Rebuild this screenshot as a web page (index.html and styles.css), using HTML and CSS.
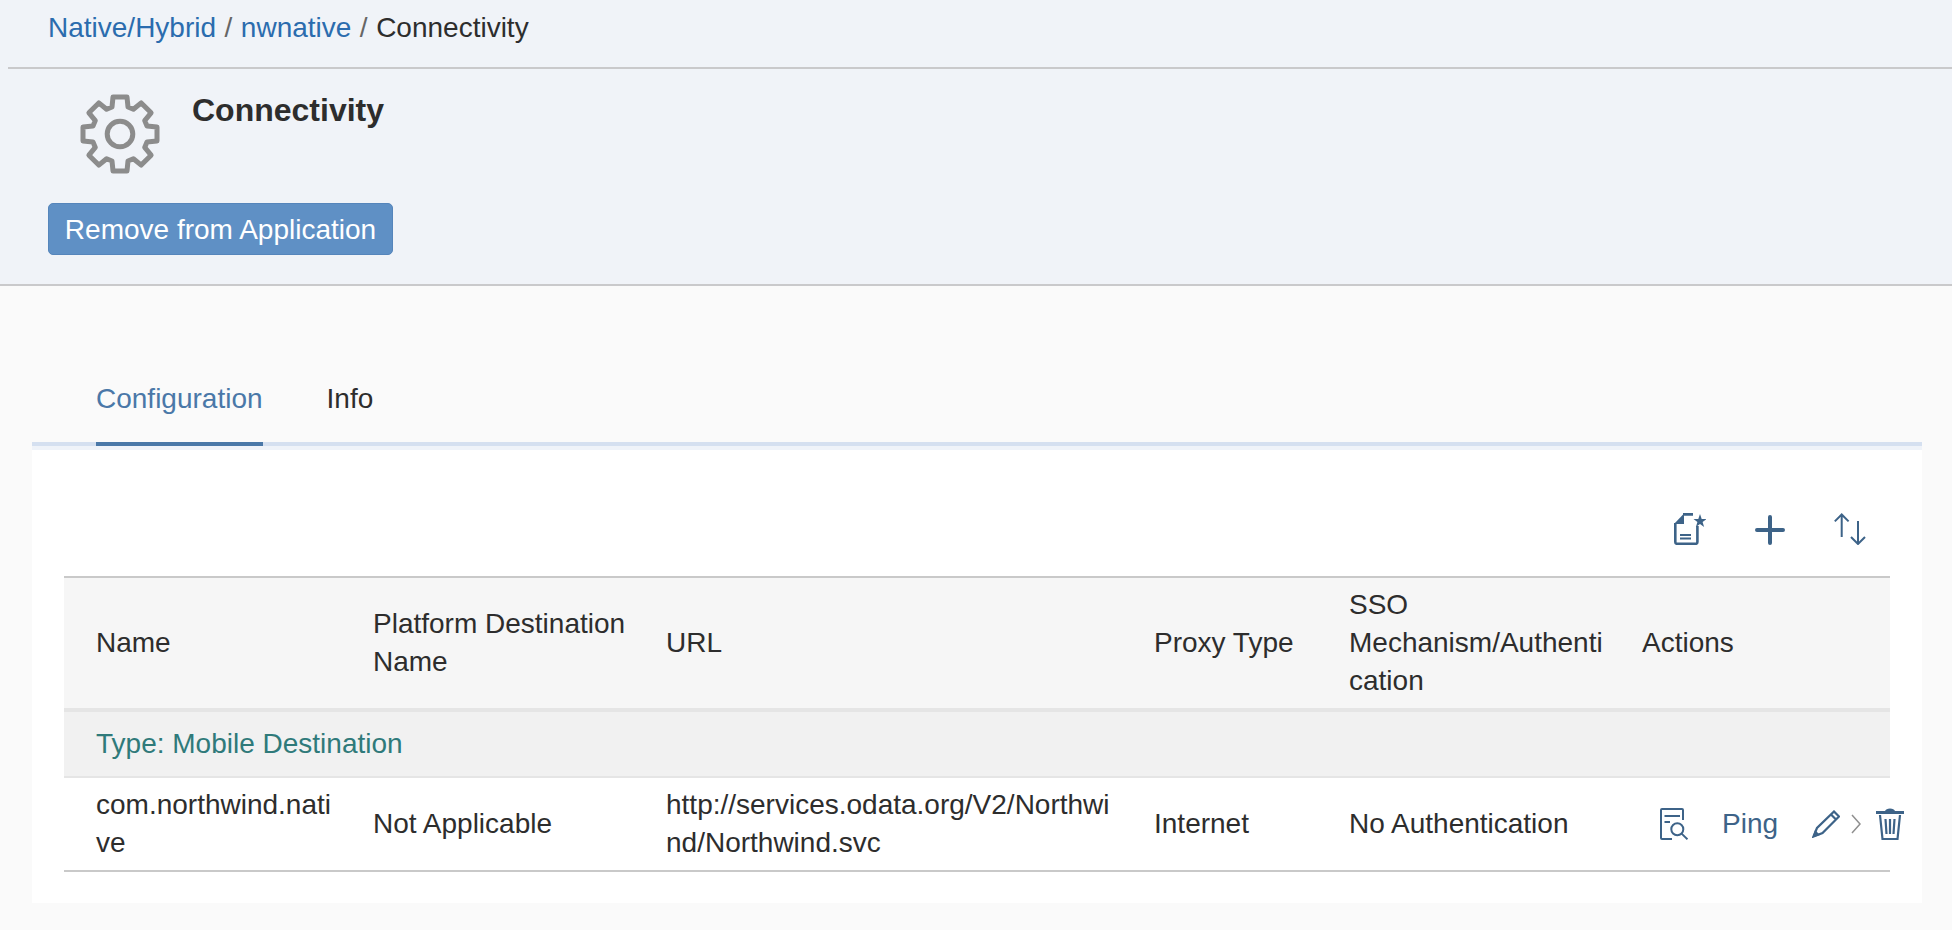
FILE: index.html
```html
<!DOCTYPE html>
<html lang="en">

<head>
    <meta charset="UTF-8">
    <meta name="viewport" content="width=device-width, initial-scale=1.0">
    <title>Connectivity</title>
    <link rel="stylesheet" href="styles.css">
</head>

<body>
    <header class="page-head">
        <nav class="crumbs">
            <a href="#">Native/Hybrid</a><span class="sep">/</span><a href="#">nwnative</a><span class="sep">/</span><span>Connectivity</span>
        </nav>
        <div class="head-main">
            <svg class="gear" viewBox="-40 -40 80 80">
                <path d="M-8 -27L-7 -37L7 -37L8 -27L13.4 -24.7L21.2 -31.1L31.1 -21.2L24.7 -13.4L27 -8L37 -7L37 7L27 8L24.7 13.4L31.1 21.2L21.2 31.1L13.4 24.7L8 27L7 37L-7 37L-8 27L-13.4 24.7L-21.2 31.1L-31.1 21.2L-24.7 13.4L-27 8L-37 7L-37 -7L-27 -8L-24.7 -13.4L-31.1 -21.2L-21.2 -31.1L-13.4 -24.7Z" />
                <circle cx="0" cy="0" r="12.8" />
            </svg>
            <h1>Connectivity</h1>
        </div>
        <button class="remove-btn" type="button">Remove from Application</button>
    </header>

    <main class="content">
        <div class="tabs">
            <a class="tab active" href="#">Configuration</a>
            <a class="tab" href="#">Info</a>
        </div>
        <section class="panel">
            <div class="toolbar">
                <svg class="tool tool-file" viewBox="0 0 32 32">
                    <path d="M9 1.4H19M1.3 10V29Q1.3 30.8 3.1 30.8H21.6Q23.4 30.8 23.4 29V13" />
                    <path class="thin" d="M6 22H17M6 25.5H17" />
                    <path class="solid" d="M0 11L10 0.4V11Z" />
                    <path class="solid" d="M26 1L27.7 6H32.5L28.6 9L30.1 14L26 11L21.9 14L23.4 9L19.5 6H24.3Z" />
                </svg>
                <svg class="tool" viewBox="0 0 32 32">
                    <path class="thick" d="M16 4V30M3 17H29" />
                </svg>
                <svg class="tool" viewBox="0 0 32 32">
                    <path d="M7.7 24V1.5M0.8 8.4L7.7 1.5L14.6 8.4M24 8V31M17 24L24 31L31 24" />
                </svg>
            </div>
            <table class="dest-table">
                <colgroup>
                    <col class="col-name">
                    <col class="col-platform">
                    <col class="col-url">
                    <col class="col-proxy">
                    <col class="col-sso">
                    <col>
                </colgroup>
                <thead>
                    <tr>
                        <th>Name</th>
                        <th>Platform Destination Name</th>
                        <th>URL</th>
                        <th>Proxy Type</th>
                        <th>SSO Mechanism/Authentication</th>
                        <th>Actions</th>
                    </tr>
                </thead>
                <tbody>
                    <tr class="group-row">
                        <td colspan="6">Type: Mobile Destination</td>
                    </tr>
                    <tr class="data-row">
                        <td>com.northwind.native</td>
                        <td>Not Applicable</td>
                        <td>http://services.odata.org/V2/Northwind/Northwind.svc</td>
                        <td>Internet</td>
                        <td>No Authentication</td>
                        <td class="actions-cell">
                            <div class="actions">
                                <svg class="act-doc" viewBox="0 0 28 32">
                                    <path d="M23 12V2Q23 1 22 1H2Q1 1 1 2V30Q1 31 2 31H12M4.5 8H20M4.5 14H10" />
                                    <circle cx="17.3" cy="21.3" r="6" />
                                    <path d="M21.6 25.6L27.5 31.3" />
                                </svg>
                                <a class="ping" href="#">Ping</a>
                                <svg class="act-edit" viewBox="0 0 28 28">
                                    <path d="M1.5 26.5L5 18L22 1.5L27 6.5L10.5 23ZM19 4.5L24 9.5" />
                                    <path class="solid" d="M0.5 27.5L3 20L8 25Z" />
                                </svg>
                                <svg class="act-chevron" viewBox="0 0 10 20">
                                    <path d="M1 1L9 10L1 19" />
                                </svg>
                                <svg class="act-trash" viewBox="0 0 28 32">
                                    <path class="bar" d="M0 4.5H28" />
                                    <path d="M4 7L6.5 31H21.5L24 7M9.5 11L10.5 26M14 11V26M18.5 11L17.5 26" />
                                    <path class="solid" d="M9 3Q10 0.5 14 0.5T19 3Z" />
                                </svg>
                            </div>
                        </td>
                    </tr>
                </tbody>
            </table>
        </section>
    </main>
</body>

</html>
```

FILE: styles.css
```css
* {
    box-sizing: border-box;
}

body {
    margin: 0;
    min-height: 930px;
    background: #fafafa;
    color: #2d2d2d;
    font-family: "Liberation Sans", Arial, sans-serif;
    font-size: 28px;
    line-height: 38px;
}

a {
    text-decoration: none;
}

svg {
    display: block;
    flex: none;
    fill: none;
    stroke: #3d6388;
    stroke-width: 2;
}

svg .solid {
    fill: #3d6388;
    stroke: none;
}

/* top section */
.page-head {
    height: 286px;
    padding-left: 8px;
    background: #f0f3f8;
    border-bottom: 2px solid #c9c9cb;
}

.crumbs {
    height: 69px;
    padding: 9px 0 0 40px;
    border-bottom: 2px solid #c9c9cb;
}

.crumbs a {
    color: #2b6cae;
}

.sep {
    margin: 0 8.5px;
    color: #666;
}

.head-main {
    display: flex;
    height: 134px;
    padding: 25px 0 0 72px;
}

.gear {
    width: 80px;
    height: 80px;
    stroke: #8c8c8c;
    stroke-width: 5;
    stroke-linejoin: round;
}

.head-main h1 {
    margin: -3px 0 0 32px;
    font-size: 32px;
    line-height: 38px;
    font-weight: bold;
    color: #2d2d2d;
}

.remove-btn {
    display: block;
    width: 345px;
    height: 52px;
    margin-left: 40px;
    padding: 2px 0 0;
    background: #5f90c5;
    border: 1px solid #5585bb;
    border-radius: 5px;
    color: #fff;
    font-family: inherit;
    font-size: 28px;
}

/* tabs + table */
.content {
    padding: 0 30px 0 32px;
}

.tabs {
    display: flex;
    gap: 64px;
    height: 164px;
    padding: 94px 0 0 64px;
    border-bottom: 8px solid #eff3f9;
    position: relative;
}

.tabs::after {
    content: "";
    position: absolute;
    left: 0;
    right: 0;
    bottom: -4px;
    height: 4px;
    background: #d5e0f0;
}

.tab {
    height: 66px;
    color: #2d2d2d;
}

.tab.active {
    color: #4a78a8;
    border-bottom: 4px solid #4a78a8;
    position: relative;
    z-index: 1;
}

.panel {
    height: 453px;
    padding: 0 32px;
    background: #fff;
}

.toolbar {
    display: flex;
    justify-content: flex-end;
    gap: 48px;
    height: 126px;
    padding: 63px 24px 0 0;
}

.tool {
    width: 32px;
    height: 32px;
}

.tool-file {
    stroke-width: 2.6;
}

.tool-file .thin {
    stroke-width: 2;
}

.tool .thick {
    stroke-width: 4;
    stroke-linecap: round;
}

.dest-table {
    width: 100%;
    table-layout: fixed;
    border-collapse: separate;
    border-spacing: 0;
    overflow-wrap: break-word;
}

.col-name {
    width: 277px;
}

.col-platform {
    width: 293px;
}

.col-url {
    width: 488px;
}

.col-proxy {
    width: 195px;
}

.col-sso {
    width: 293px;
}

th,
td {
    padding: 0 4px 0 32px;
    text-align: left;
    font-weight: normal;
    vertical-align: middle;
}

td {
    word-break: break-all;
}

th {
    height: 136px;
    background: #f6f6f6;
    border-top: 2px solid #c9c9c9;
    border-bottom: 4px solid #e5e5e5;
}

.group-row td {
    height: 66px;
    background: #f1f1f1;
    border-bottom: 2px solid #e5e5e5;
    color: #2f7a7a;
}

.data-row td {
    height: 94px;
    border-bottom: 2px solid #c9c9c9;
}

.actions-cell {
    white-space: nowrap;
}

.actions {
    display: flex;
    align-items: center;
    padding-left: 18px;
}

.act-doc {
    width: 28px;
    height: 32px;
}

.ping {
    margin: 0 34px;
    color: #3d6388;
}

.act-edit {
    width: 28px;
    height: 28px;
    stroke-width: 2.2;
}

.act-chevron {
    width: 10px;
    height: 20px;
    margin: 0 15px 0 11px;
    stroke: #8f8f8f;
    stroke-width: 1.5;
}

.act-trash {
    width: 28px;
    height: 32px;
    stroke-width: 2.2;
}

.act-trash .bar {
    stroke-width: 3;
}
```
